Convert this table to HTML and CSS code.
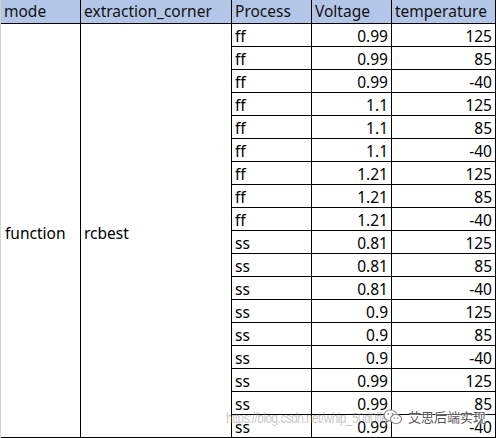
FILE: index.html
```html
<!DOCTYPE html>
<html>
<head>
<meta charset="utf-8">
<link rel="stylesheet" href="styles.css">
</head>
<body>
<div class="sheet">
  <div class="grid">
    <div class="c hd">mode</div>
    <div class="c hd">extraction_corner</div>
    <div class="c hd">Process</div>
    <div class="c hd">Voltage</div>
    <div class="c hd">temperature</div>

    <div class="c span mode">function</div>
    <div class="c span corner">rcbest</div>

    <div class="c">ff</div><div class="c num">0.99</div><div class="c num">125</div>
    <div class="c">ff</div><div class="c num">0.99</div><div class="c num">85</div>
    <div class="c">ff</div><div class="c num">0.99</div><div class="c num">-40</div>
    <div class="c">ff</div><div class="c num">1.1</div><div class="c num">125</div>
    <div class="c">ff</div><div class="c num">1.1</div><div class="c num">85</div>
    <div class="c">ff</div><div class="c num">1.1</div><div class="c num">-40</div>
    <div class="c">ff</div><div class="c num">1.21</div><div class="c num">125</div>
    <div class="c">ff</div><div class="c num">1.21</div><div class="c num">85</div>
    <div class="c">ff</div><div class="c num">1.21</div><div class="c num">-40</div>
    <div class="c">ss</div><div class="c num">0.81</div><div class="c num">125</div>
    <div class="c">ss</div><div class="c num">0.81</div><div class="c num">85</div>
    <div class="c">ss</div><div class="c num">0.81</div><div class="c num">-40</div>
    <div class="c">ss</div><div class="c num">0.9</div><div class="c num">125</div>
    <div class="c">ss</div><div class="c num">0.9</div><div class="c num">85</div>
    <div class="c">ss</div><div class="c num">0.9</div><div class="c num">-40</div>
    <div class="c">ss</div><div class="c num">0.99</div><div class="c num">125</div>
    <div class="c">ss</div><div class="c num">0.99</div><div class="c num">85</div>
    <div class="c">ss</div><div class="c num">0.99</div><div class="c num">-40</div>
  </div>
  <div class="watermark">
    <span class="wm-url">https://blog.csdn.net/whip_50d0ffe</span>
    <svg class="wm-icon" width="20" height="16" viewBox="0 0 20 16">
      <ellipse cx="7.5" cy="6.5" rx="6.5" ry="5.5" fill="#fff" stroke="#8a8a8a" stroke-width="1.2"/>
      <path d="M3.5 11 L2.8 13.6 L6 11.8" fill="#fff" stroke="#8a8a8a" stroke-width="1.1"/>
      <ellipse cx="13" cy="10" rx="5.5" ry="4.5" fill="#fff" stroke="#8a8a8a" stroke-width="1.2"/>
      <circle cx="5.2" cy="5" r="0.9" fill="#8a8a8a"/>
      <circle cx="9.6" cy="5" r="0.9" fill="#8a8a8a"/>
      <circle cx="11.2" cy="9.2" r="0.8" fill="#8a8a8a"/>
      <circle cx="14.8" cy="9.2" r="0.8" fill="#8a8a8a"/>
    </svg>
    <span class="wm-name">艾思后端实现</span>
  </div>
</div>
</body>
</html>
```
FILE: styles.css
```css
html, body {
  margin: 0;
  padding: 0;
  background: #fff;
}

.sheet {
  position: relative;
  width: 496px;
  height: 438px;
  overflow: hidden;
}

.grid {
  display: grid;
  grid-template-columns: 79px 150px 79px 79px 103px;
  grid-template-rows: 23px repeat(18, 22px);
  gap: 1px;
  background: #000;
  border-left: 1px solid #d4d4d4;
  padding: 0 1px 1px 0;
  width: 494px;
  font-family: "Noto Sans", "Liberation Sans", Arial, sans-serif;
  font-size: 15.5px;
  color: #000;
}

.c {
  background: #fff;
  padding: 1px 3px 0 3px;
  display: flex;
  align-items: center;
  line-height: 18px;
  white-space: nowrap;
  overflow: hidden;
}

.hd {
  background: #b4c6e7;
  color: #111;
  padding-top: 0;
  padding-bottom: 1px;
}

.num {
  justify-content: flex-end;
}

.span {
  grid-row: 2 / span 18;
  padding-top: 4px;
}

.mode {
  grid-column: 1;
  padding-left: 4px;
}

.corner {
  grid-column: 2;
}

.watermark {
  position: absolute;
  left: 226px;
  top: 407px;
  height: 20px;
  display: flex;
  align-items: center;
  pointer-events: none;
}

.wm-url {
  font-family: "Liberation Sans", Arial, sans-serif;
  font-size: 15px;
  color: rgba(140, 140, 140, 0.5);
  letter-spacing: -0.6px;
  transform: scaleX(0.78);
  transform-origin: left center;
  white-space: nowrap;
}

.wm-icon {
  position: absolute;
  left: 157px;
  top: 2px;
}

.wm-name {
  position: absolute;
  left: 182px;
  top: 2px;
  font-family: "Noto Sans CJK SC", sans-serif;
  font-size: 13px;
  line-height: 16px;
  color: #555;
  white-space: nowrap;
  text-shadow: 0 0 2px #fff, 0 0 2px #fff;
}
```
